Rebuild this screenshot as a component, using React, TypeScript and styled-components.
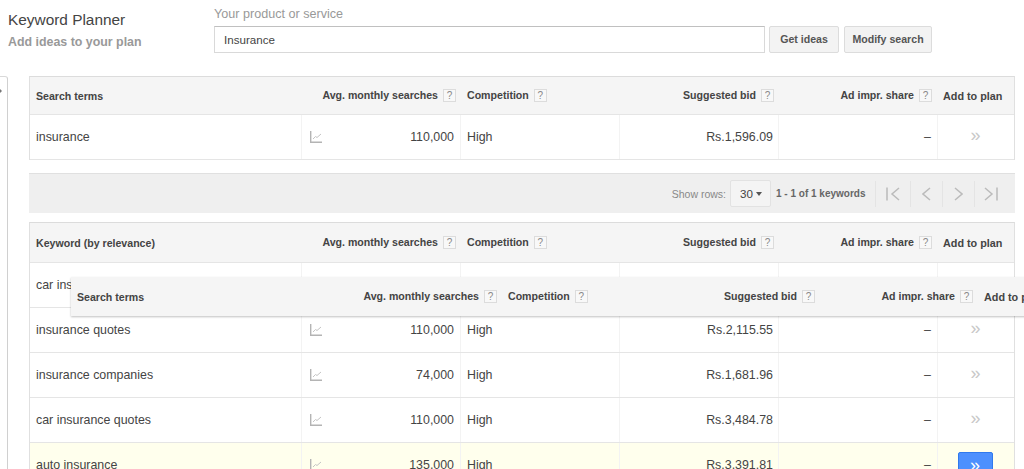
import { createGlobalStyle, styled } from 'styled-components'

const GlobalStyle = createGlobalStyle`
  html, body {
    margin: 0;
    height: 100%;
    overflow: hidden;
    background: #fff;
    font-family: 'Liberation Sans', Arial, sans-serif;
    color: #333;
  }
  * { box-sizing: border-box; }
`

const COLUMNS = '271px 159px 159px 159px 159px 77px'

const ChartIcon = () => (
  <ChartSvg viewBox="0 0 12 12">
    <path d="M0.7 0v11.3H12" fill="none" stroke="#b4b4b4" strokeWidth="1.4" />
    <path d="M3 8l2.5-2.5 1.5 1L11 3" fill="none" stroke="#c4c4c4" strokeWidth="1" />
  </ChartSvg>
)

const Help = () => <HelpBox>?</HelpBox>

const HeaderCells = ({ first }: { first: string }) => (
  <>
    <TermHead>{first}</TermHead>
    <RightHead>
      <HeadLabel>Avg. monthly searches</HeadLabel>
      <Help />
    </RightHead>
    <LeftHead>
      <HeadLabel>Competition</HeadLabel>
      <Help />
    </LeftHead>
    <RightHead>
      <HeadLabel>Suggested bid</HeadLabel>
      <Help />
    </RightHead>
    <RightHead $pad={5}>
      <HeadLabel>Ad impr. share</HeadLabel>
      <Help />
    </RightHead>
    <PlanHead>Add to plan</PlanHead>
  </>
)

type RowData = {
  term: string
  searches: string
  bid: string
  active?: boolean
}

const Row = ({ term, searches, bid, active }: RowData) => (
  <DataRow $active={active}>
    <TermCell>{term}</TermCell>
    <SearchCell>
      <ChartIcon />
      <span>{searches}</span>
    </SearchCell>
    <Cell>High</Cell>
    <BidCell>{bid}</BidCell>
    <NumberCell>–</NumberCell>
    <AddCell>{active ? <AddButton>»</AddButton> : <AddGlyph>»</AddGlyph>}</AddCell>
  </DataRow>
)

const rows: RowData[] = [
  { term: 'insurance quotes', searches: '110,000', bid: 'Rs.2,115.55' },
  { term: 'insurance companies', searches: '74,000', bid: 'Rs.1,681.96' },
  { term: 'car insurance quotes', searches: '110,000', bid: 'Rs.3,484.78' },
  { term: 'auto insurance', searches: '135,000', bid: 'Rs.3,391.81', active: true },
]

const App = () => {
  return (
    <>
      <GlobalStyle />
      <TopBar>
        <TitleBlock>
          <Title>Keyword Planner</Title>
          <Subtitle>Add ideas to your plan</Subtitle>
        </TitleBlock>
        <SearchBlock>
          <SearchLabel>Your product or service</SearchLabel>
          <SearchRow>
            <SearchInput>Insurance</SearchInput>
            <GrayButton $width={70}>Get ideas</GrayButton>
            <GrayButton $width={88}>Modify search</GrayButton>
          </SearchRow>
        </SearchBlock>
      </TopBar>
      <Body>
        <Rail>
          <RailTick />
        </Rail>
        <Main>
          <Table>
            <HeaderRow>
              <HeaderCells first="Search terms" />
            </HeaderRow>
            <Row term="insurance" searches="110,000" bid="Rs.1,596.09" />
          </Table>
          <Pager>
            <PagerLabel>Show rows:</PagerLabel>
            <RowsSelect>
              30
              <Caret />
            </RowsSelect>
            <PagerCount>1 - 1 of 1 keywords</PagerCount>
            <PagerNav>
              <NavButton $width={35}>
                <svg width="14" height="14" viewBox="0 0 14 14" fill="none" stroke="#bbb" strokeWidth="1.5">
                  <path d="M1 0.5v13M13 1L6 7l7 6" />
                </svg>
              </NavButton>
              <NavButton>
                <svg width="9" height="14" viewBox="0 0 9 14" fill="none" stroke="#bbb" strokeWidth="1.5">
                  <path d="M8 1L1 7l7 6" />
                </svg>
              </NavButton>
              <NavButton>
                <svg width="9" height="14" viewBox="0 0 9 14" fill="none" stroke="#bbb" strokeWidth="1.5">
                  <path d="M1 1l7 6-7 6" />
                </svg>
              </NavButton>
              <NavButton>
                <svg width="14" height="14" viewBox="0 0 14 14" fill="none" stroke="#bbb" strokeWidth="1.5">
                  <path d="M13 0.5v13M1 1l7 6-7 6" />
                </svg>
              </NavButton>
            </PagerNav>
          </Pager>
          <SecondTable>
            <HeaderRow $tall>
              <HeaderCells first="Keyword (by relevance)" />
            </HeaderRow>
            <DataRow>
              <TermCell>car insurance</TermCell>
              <SearchCell />
              <Cell />
              <BidCell />
              <NumberCell />
              <AddCell />
            </DataRow>
            {rows.map((row) => (
              <Row key={row.term} {...row} />
            ))}
          </SecondTable>
          <FloatingHeader>
            <HeaderCells first="Search terms" />
          </FloatingHeader>
        </Main>
      </Body>
    </>
  )
}

export default App

const TopBar = styled.header`
  height: 76px;
  display: flex;
  padding-left: 8px;
`

const TitleBlock = styled.div`
  width: 206px;
  padding-top: 11px;
`

const Title = styled.div`
  font-size: 15.4px;
  line-height: 18px;
  color: #444;
`

const Subtitle = styled.div`
  margin-top: 5px;
  font-size: 12.4px;
  line-height: 16px;
  font-weight: 700;
  color: #999;
`

const SearchBlock = styled.div`
  padding-top: 7px;
`

const SearchLabel = styled.div`
  font-size: 12.6px;
  line-height: 15px;
  color: #999;
  margin-bottom: 4px;
`

const SearchRow = styled.div`
  display: flex;
`

const SearchInput = styled.div`
  width: 551px;
  height: 27px;
  padding-left: 9px;
  margin-right: 4px;
  border: 1px solid #d9d9d9;
  border-top-color: #c0c0c0;
  font-size: 11.6px;
  line-height: 25px;
  color: #444;
`

const GrayButton = styled.button<{ $width: number }>`
  width: ${({ $width }) => $width}px;
  height: 27px;
  margin-right: 5px;
  padding: 0 0 2px;
  border: 1px solid #dcdcdc;
  border-radius: 2px;
  background: #f3f3f3;
  font-family: inherit;
  font-size: 10.6px;
  font-weight: 700;
  color: #555;
`

const Body = styled.div`
  display: flex;
`

const Rail = styled.div`
  position: relative;
  width: 8px;
  height: 393px;
  border-top: 1px solid #d9d9d9;
  border-right: 1px solid #d0d0d0;
  border-top-right-radius: 3px;
`

const RailTick = styled.div`
  position: absolute;
  left: 0;
  top: 12px;
  width: 0;
  height: 0;
  border-top: 2px solid transparent;
  border-bottom: 2px solid transparent;
  border-left: 2px solid #777;
`

const Main = styled.main`
  position: relative;
  width: 986px;
  margin-left: 21px;
`

const Table = styled.div`
  border: 1px solid #e0e0e0;
  border-bottom: 0;
  border-top-color: #dcdcdc;
`

const SecondTable = styled(Table)`
  margin-top: 9px;
`

const HeaderRow = styled.div<{ $tall?: boolean }>`
  display: grid;
  grid-template-columns: ${COLUMNS};
  height: ${({ $tall }) => ($tall ? 40 : 38)}px;
  background: #f5f5f5;
  border-bottom: 1px solid #e5e5e5;
  font-size: 10.6px;
  font-weight: 700;
  color: #444;
`

const FloatingHeader = styled.div`
  position: absolute;
  left: 42px;
  top: 201px;
  display: grid;
  grid-template-columns: ${COLUMNS};
  width: 985px;
  height: 39px;
  background: #f5f5f5;
  box-shadow: 0 1px 2px rgba(0, 0, 0, 0.25);
  font-size: 10.6px;
  font-weight: 700;
  color: #444;
`

const TermHead = styled.div`
  display: flex;
  align-items: center;
  padding: 1px 0 0 6px;
`

const RightHead = styled.div<{ $pad?: number }>`
  display: flex;
  align-items: center;
  justify-content: flex-end;
  gap: 5px;
  padding-right: ${({ $pad }) => $pad ?? 4}px;
`

const LeftHead = styled.div`
  display: flex;
  align-items: center;
  gap: 5px;
  padding-left: 7px;
`

const PlanHead = styled.div`
  display: flex;
  align-items: center;
  padding: 1px 0 0 6px;
  font-size: 10.8px;
  white-space: nowrap;
`

const HeadLabel = styled.span`
  white-space: nowrap;
  margin-top: -2px;
`

const HelpBox = styled.span`
  width: 13px;
  height: 13px;
  flex: none;
  border: 1px solid #dcdcdc;
  background: #f8f8f8;
  font-size: 10px;
  font-weight: 400;
  line-height: 11px;
  text-align: center;
  color: #888;
`

const DataRow = styled.div<{ $active?: boolean }>`
  display: grid;
  grid-template-columns: ${COLUMNS};
  height: 45px;
  background: ${({ $active }) => ($active ? '#ffffed' : '#fff')};
  border-bottom: 1px solid #e5e5e5;
  font-size: 12.4px;
  color: #444;
`

const Cell = styled.div`
  display: flex;
  align-items: center;
  padding: 0 6px;
  border-left: 1px solid #f3f3f3;
`

const TermCell = styled(Cell)`
  border-left: 0;
  padding-left: 6px;
`

const SearchCell = styled(Cell)`
  justify-content: space-between;
  padding-left: 8px;
`

const NumberCell = styled(Cell)`
  justify-content: flex-end;
`

const BidCell = styled(NumberCell)`
  padding-right: 5px;
`

const AddCell = styled(Cell)`
  justify-content: center;
  padding: 0;
`

const ChartSvg = styled.svg`
  width: 12px;
  height: 12px;
`

const AddGlyph = styled.span`
  margin: -3px 1px 0 0;
  font-size: 18px;
  color: #c8c8c8;
`

const AddButton = styled.button`
  width: 35px;
  height: 27px;
  margin-right: 2px;
  padding: 0;
  border: 1px solid #3079ed;
  border-radius: 2px;
  background: #4d90fe;
  font-size: 18px;
  color: #fff;
`

const Pager = styled.div`
  display: flex;
  align-items: center;
  justify-content: flex-end;
  height: 40px;
  margin-top: 13px;
  background: #efefef;
  border-top: 1px solid #e0e0e0;
  padding-right: 9px;
`

const PagerLabel = styled.span`
  font-size: 10.5px;
  color: #888;
  margin-right: 4px;
`

const RowsSelect = styled.div`
  display: flex;
  align-items: center;
  justify-content: space-between;
  width: 41px;
  height: 27px;
  padding: 0 8px 0 9px;
  border: 1px solid #e2e2e2;
  border-radius: 2px;
  background: #f4f4f4;
  font-size: 11.6px;
  color: #444;
`

const Caret = styled.span`
  width: 0;
  height: 0;
  margin-top: 1px;
  border-left: 3.5px solid transparent;
  border-right: 3.5px solid transparent;
  border-top: 4px solid #555;
`

const PagerCount = styled.span`
  width: 99px;
  margin-left: 5px;
  font-size: 10px;
  font-weight: 700;
  color: #666;
  white-space: nowrap;
`

const PagerNav = styled.div`
  display: flex;
`

const NavButton = styled.div<{ $width?: number }>`
  display: flex;
  align-items: center;
  justify-content: center;
  width: ${({ $width }) => $width ?? 32}px;
  height: 26px;
  border-left: 1px solid #e4e4e4;
`
